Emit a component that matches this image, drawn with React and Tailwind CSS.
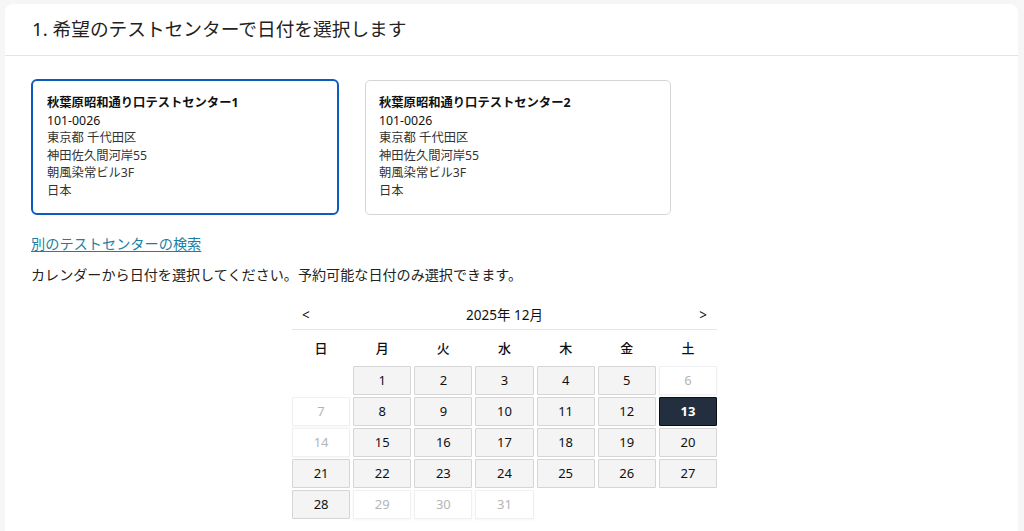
import React from 'react';

const centers = [
  { name: '秋葉原昭和通り口テストセンター1', selected: true },
  { name: '秋葉原昭和通り口テストセンター2', selected: false },
];

const weekdays = ['日', '月', '火', '水', '木', '金', '土'];

// null = empty slot, state: 'open' | 'off' | 'sel'
const off = [6, 7, 14, 29, 30, 31];
const cells = [null];
for (let d = 1; d <= 31; d++) {
  cells.push({ d, state: d === 13 ? 'sel' : off.includes(d) ? 'off' : 'open' });
}

function DayCell({ cell }) {
  if (!cell) return <div className="h-[29px]" />;
  if (cell.state === 'sel') {
    return (
      <div className="h-[29px] flex items-center justify-center bg-[#232f3e] border border-[#0b0f14] rounded-[1px] text-white font-bold text-[13px]">
        {cell.d}
      </div>
    );
  }
  if (cell.state === 'off') {
    return (
      <div className="h-[29px] flex items-center justify-center bg-white border border-[#f0f0f0] shadow-[0_1px_2px_rgba(0,0,0,0.04)] text-[#b5b5b5] text-[13px]">
        {cell.d}
      </div>
    );
  }
  return (
    <div className="h-[29px] flex items-center justify-center bg-[#f4f4f4] border border-[#d5d5d5] rounded-[1px] text-[#0f1111] text-[13px]">
      {cell.d}
    </div>
  );
}

export default function App() {
  return (
    <div
      className="min-h-[531px] bg-[#f6f6f6] pl-[5px] pr-[6px] pt-[4px] overflow-hidden"
      style={{ fontFamily: '"Noto Sans", "Noto Sans CJK JP", sans-serif' }}
    >
      <div className="bg-white rounded-t-[8px] min-h-[527px] text-[#0f1111]">
        <div className="h-[52px] flex items-center px-[27px] border-b border-[#e3e3e3]">
          <h2 className="text-[18.7px] text-[#222]">1. 希望のテストセンターで日付を選択します</h2>
        </div>

        <div className="px-[26px] pt-[23px]">
          <div className="flex gap-[26px]">
            {centers.map((c) => (
              <div
                key={c.name}
                className={
                  c.selected
                    ? 'w-[308px] h-[136px] rounded-[6px] border-2 border-[#0b5cbf] px-[14px] pt-[13px] text-[12.3px] leading-[17.6px]'
                    : 'w-[306px] h-[135px] rounded-[5px] border border-[#d5d5d5] px-[13px] pt-[13px] mt-[1px] text-[12.3px] leading-[17.6px]'
                }
              >
                <div className="font-bold">{c.name}</div>
                <div>101-0026</div>
                <div className="text-[#333]">東京都 千代田区</div>
                <div className="text-[#333]">神田佐久間河岸55</div>
                <div className="text-[#333]">朝風染常ビル3F</div>
                <div className="text-[#333]">日本</div>
              </div>
            ))}
          </div>

          <a href="#" className="block mt-[18px] text-[14.2px] text-[#1a7fa6] underline underline-offset-2 w-fit">
            別のテストセンターの検索
          </a>
          <p className="mt-[10px] text-[14.1px] text-[#222]">
            カレンダーから日付を選択してください。予約可能な日付のみ選択できます。
          </p>

          <div className="w-[425px] ml-[261px] mt-[16px]">
            <div className="h-[29px] flex items-center justify-between px-[10px] border-b border-[#e6e6e6] text-[13.5px]">
              <span>&lt;</span>
              <span>2025年 12月</span>
              <span>&gt;</span>
            </div>
            <div className="grid grid-cols-7 gap-x-[3px] h-[36px] items-center text-[13px] font-medium">
              {weekdays.map((w) => (
                <div key={w} className="text-center">{w}</div>
              ))}
            </div>
            <div className="grid grid-cols-7 gap-x-[3px] gap-y-[2px]">
              {cells.map((c, i) => (
                <DayCell key={i} cell={c} />
              ))}
            </div>
          </div>
        </div>
      </div>
    </div>
  );
}
